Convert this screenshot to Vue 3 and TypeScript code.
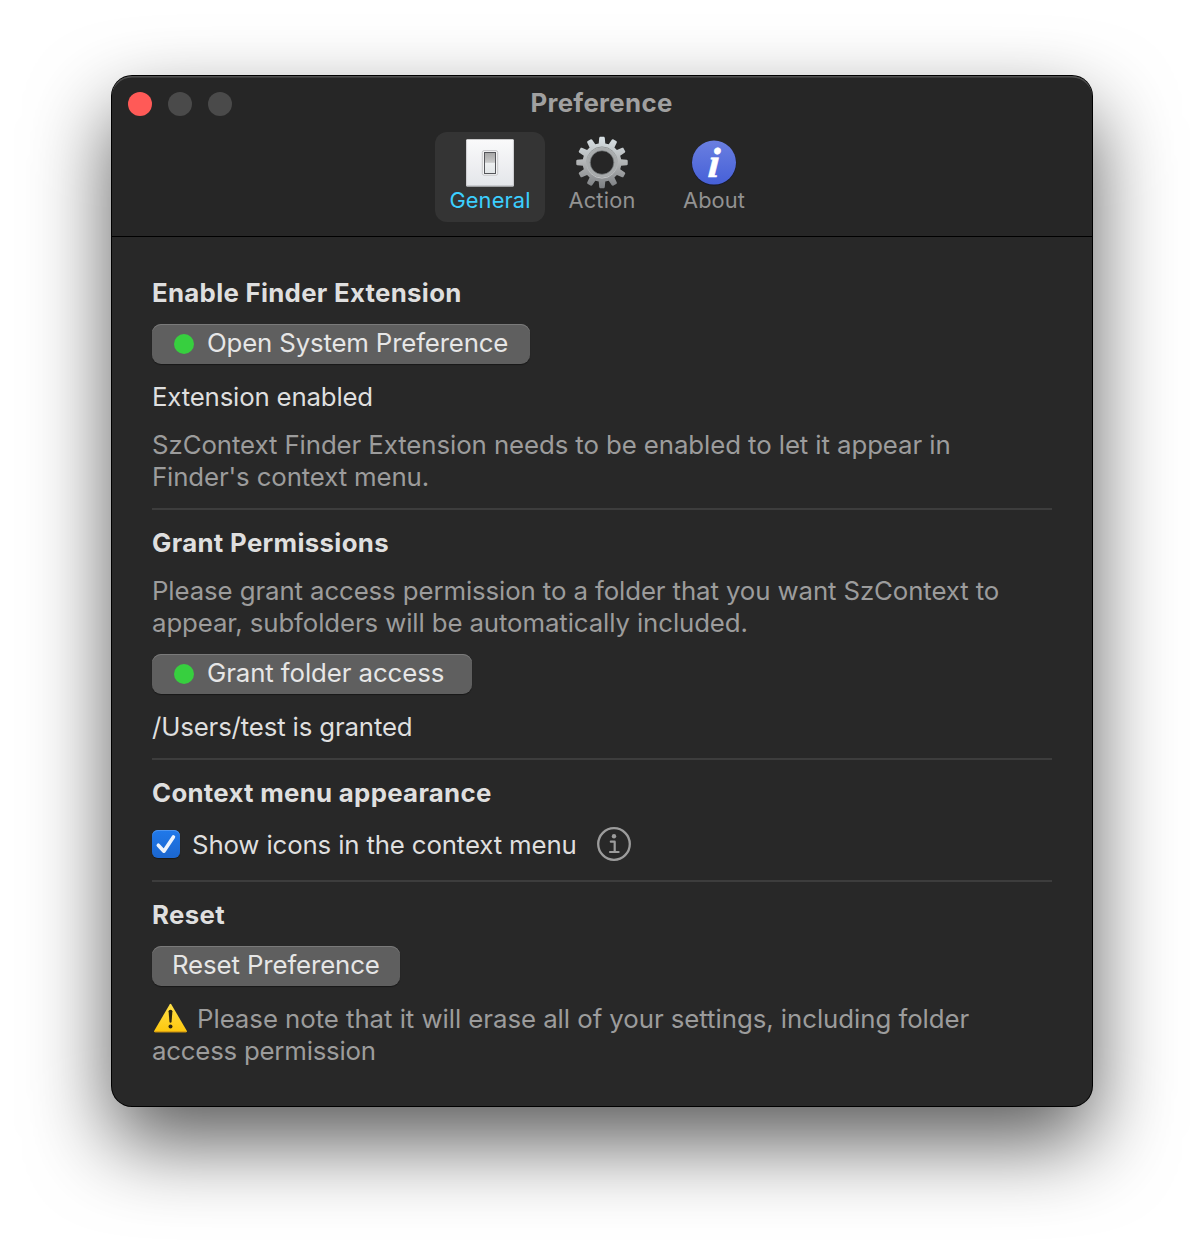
<script setup lang="ts">
import type { Directive } from 'vue'

// Tracks a single line of text so that its advance width equals the given value.
const vTrack: Directive<HTMLElement, number> = {
  mounted(el, { value }) {
    const count = (el.textContent ?? '').length
    const natural = el.getBoundingClientRect().width
    el.style.letterSpacing = `${(value - natural) / count}px`
  },
}

// Outline of a twelve-toothed gear centred on the origin.
function gearPath(): string {
  const teeth = 12
  const root = 19.4
  const tip = 25.8
  const points: string[] = []
  for (let i = 0; i < teeth; i++) {
    const mid = (i * 2 * Math.PI) / teeth
    const corners: [number, number][] = [
      [root, -0.17],
      [tip - 0.8, -0.112],
      [tip, -0.08],
      [tip, 0.08],
      [tip - 0.8, 0.112],
      [root, 0.17],
    ]
    for (const [r, a] of corners) {
      points.push(`${(r * Math.sin(mid + a)).toFixed(2)} ${(-r * Math.cos(mid + a)).toFixed(2)}`)
    }
  }
  return `M${points.join('L')}ZM11.8 0A11.8 11.8 0 1 0 -11.8 0A11.8 11.8 0 1 0 11.8 0Z`
}

const gear = gearPath()
</script>

<template>
  <main class="desktop">
    <section class="window">
      <header class="titlebar">
        <div class="lights">
          <i class="light close"></i>
          <i class="light"></i>
          <i class="light"></i>
        </div>
        <h1><span v-track="142.2" class="line">Preference</span></h1>
        <nav class="tabs">
          <button class="tab active">
            <svg width="56" height="56" viewBox="0 0 56 56">
              <defs>
                <linearGradient id="plate" x1="0" y1="0" x2="0" y2="1">
                  <stop offset="0" stop-color="#fafafb" />
                  <stop offset="1" stop-color="#e4e6ea" />
                </linearGradient>
                <linearGradient id="rocker" x1="0" y1="0" x2="0" y2="1">
                  <stop offset="0" stop-color="#a5a5a5" />
                  <stop offset=".47" stop-color="#c9c9c9" />
                  <stop offset=".5" stop-color="#eef0f1" />
                  <stop offset="1" stop-color="#e2e5e7" />
                </linearGradient>
              </defs>
              <rect x="4.2" y="5.2" width="47.6" height="47.2" rx="1" fill="url(#plate)" />
              <path d="M4.6 51.9H51.4" stroke="#babcc0" stroke-width="1" />
              <path d="M4.6 6V51.5M51.4 6V51.5" stroke="#d0d1d4" stroke-width=".8" />
              <rect x="20.3" y="16.6" width="15.4" height="24.6" rx="1.8" fill="#f4f4f5" stroke="#c2c2c4" stroke-width=".9" />
              <rect x="22.5" y="18.5" width="11" height="21" fill="url(#rocker)" stroke="#55565a" stroke-width="1" />
            </svg>
            <span v-track="81.2" class="line">General</span>
          </button>
          <button class="tab">
            <svg width="56" height="56" viewBox="0 0 56 56">
              <defs>
                <linearGradient id="steel" x1="0" y1="0" x2="0" y2="1">
                  <stop offset="0" stop-color="#d8e1e5" />
                  <stop offset=".5" stop-color="#b2b4b5" />
                  <stop offset="1" stop-color="#7c7f82" />
                </linearGradient>
                <linearGradient id="rim" x1="0" y1="0" x2="0" y2="1">
                  <stop offset="0" stop-color="#8f9495" />
                  <stop offset="1" stop-color="#c4c6c7" />
                </linearGradient>
              </defs>
              <g transform="translate(28 28.5)">
                <path :d="gear" fill="url(#steel)" fill-rule="evenodd" />
                <circle r="15.6" fill="none" stroke="url(#rim)" stroke-width="1" />
                <circle r="13.4" fill="none" stroke="#a8abac" stroke-width="3" />
                <circle r="11.8" fill="none" stroke="#707375" stroke-width=".8" />
              </g>
            </svg>
            <span v-track="67.2" class="line">Action</span>
          </button>
          <button class="tab">
            <svg width="56" height="56" viewBox="0 0 56 56">
              <defs>
                <linearGradient id="ball" x1="0" y1="0" x2="0" y2="1">
                  <stop offset="0" stop-color="#6a7fe0" />
                  <stop offset="1" stop-color="#4660d8" />
                </linearGradient>
              </defs>
              <circle cx="28" cy="29.3" r="22.4" fill="#191b2c" />
              <circle cx="28" cy="28.6" r="22" fill="url(#ball)" />
              <text x="-1" y="0" transform="translate(22.3 43) skewX(-4)" class="glyph">i</text>
            </svg>
            <span v-track="62" class="line">About</span>
          </button>
        </nav>
      </header>

      <div class="content">
        <section class="group">
          <h2><span v-track="309.6" class="line">Enable Finder Extension</span></h2>
          <button class="push push-open">
            <i class="dot"></i><span v-track="301.2" class="line">Open System Preference</span>
          </button>
          <p class="status"><span v-track="221" class="line">Extension enabled</span></p>
          <p class="note">
            <span v-track="798.6" class="line">SzContext Finder Extension needs to be enabled to let it appear in</span><br />
            <span v-track="277" class="line">Finder's context menu.</span>
          </p>
        </section>

        <section class="group">
          <h2><span v-track="237" class="line">Grant Permissions</span></h2>
          <p class="note">
            <span v-track="847.2" class="line">Please grant access permission to a folder that you want SzContext to</span><br />
            <span v-track="595.8" class="line">appear, subfolders will be automatically included.</span>
          </p>
          <button class="push push-grant">
            <i class="dot"></i><span v-track="237.3" class="line">Grant folder access</span>
          </button>
          <p class="status"><span v-track="260.5" class="line">/Users/test is granted</span></p>
        </section>

        <section class="group group-menu">
          <h2><span v-track="339.6" class="line">Context menu appearance</span></h2>
          <div class="option">
            <span class="checkbox">
              <svg width="28" height="28" viewBox="0 0 28 28">
                <path d="M6.3 15.2L11.9 21.2L21.4 6.9" fill="none" stroke="#fff" stroke-opacity=".92" stroke-width="3.6" stroke-linecap="round" stroke-linejoin="round" />
              </svg>
            </span>
            <span v-track="384.6" class="line">Show icons in the context menu</span>
            <svg class="info" width="34" height="34" viewBox="0 0 34 34">
              <g fill="none" stroke="#9c9c9c">
                <circle cx="17" cy="17" r="15.8" stroke-width="2.3" />
                <path d="M13.8 14.7H17.7V24.9M13 25H21.6" stroke-width="2.2" stroke-linecap="round" stroke-linejoin="round" />
              </g>
              <circle cx="17" cy="9.3" r="2.2" fill="#9c9c9c" />
            </svg>
          </div>
        </section>

        <section class="group">
          <h2><span v-track="73.2" class="line">Reset</span></h2>
          <button class="push push-reset"><span v-track="207.8" class="line">Reset Preference</span></button>
          <p class="note note-reset">
            <svg class="warning" width="34" height="30" viewBox="0 0 34 30">
              <defs>
                <linearGradient id="amber" x1="0" y1="0" x2="0" y2="1">
                  <stop offset="0" stop-color="#ffe04a" />
                  <stop offset="1" stop-color="#fdc70c" />
                </linearGradient>
              </defs>
              <path d="M15.6 1.4Q16.5 0 17.4 1.4L32.6 27.6Q33.4 29.2 32 29.2H1Q-.4 29.2 .4 27.6Z" fill="url(#amber)" />
              <path d="M1 28.7H32" stroke="#d99b12" stroke-width="1" />
              <path d="M14.6 8.2Q14.6 6.7 16.5 6.7T18.4 8.2L17.6 18.6Q17.4 19.8 16.5 19.8T15.4 18.6Z" fill="#2a2410" />
              <circle cx="16.5" cy="23.6" r="2" fill="#2a2410" />
            </svg><span v-track="772.2" class="line">Please note that it will erase all of your settings, including folder</span><br />
            <span v-track="223.8" class="line">access permission</span>
          </p>
        </section>
      </div>
    </section>
  </main>
</template>

<style>
body {
  margin: 0;
  background: #fff;
}
</style>

<style scoped>
.desktop {
  box-sizing: border-box;
  width: 1204px;
  height: 1254px;
  padding: 76px 112px 0;
  overflow: hidden;
  background: #fff;
  font-family: Inter, "Liberation Sans", sans-serif;
  font-size: 25.8px;
  font-weight: 430;
  line-height: 32px;
  color: #dfdfdf;
}
.window {
  width: 980px;
  height: 1030px;
  border-radius: 20px;
  background: #282828;
  box-shadow: 0 0 0 1px #000, 0 36px 82px rgba(0, 0, 0, 0.65);
}
.titlebar {
  position: relative;
  box-sizing: border-box;
  height: 161px;
  border-bottom: 1px solid #000;
  border-radius: 20px 20px 0 0;
  background: #262626;
  box-shadow: inset 0 2px 0 -0.5px #505050;
}
.lights {
  position: absolute;
  left: 16px;
  top: 16px;
  display: flex;
  gap: 16px;
}
.light {
  width: 24px;
  height: 24px;
  border-radius: 50%;
  background: #4a4a4a;
}
.light.close {
  background: #ff5a57;
}
h1,
h2,
p {
  margin: 0;
  font-size: inherit;
  font-weight: inherit;
}
h1 {
  padding: 11px 1px 0 0;
  text-align: center;
  font-weight: 660;
  color: #a0a0a0;
}
.line {
  display: inline-block;
  white-space: nowrap;
}
.tabs {
  display: flex;
  justify-content: center;
  gap: 2px;
  margin-top: 13px;
}
button {
  padding: 0;
  border: 0;
  font: inherit;
  color: inherit;
}
.tab {
  display: flex;
  flex-direction: column;
  align-items: center;
  width: 110px;
  height: 90px;
  padding-top: 2px;
  border-radius: 12px;
  background: none;
  font-size: 21.8px;
  line-height: 26px;
  color: #929292;
}
.tab svg {
  margin-bottom: -3px;
}
.tab.active {
  background: #343434;
  color: #3ccfff;
}
.glyph {
  font: italic 700 42px "Liberation Serif", serif;
  fill: #fff;
  stroke: #fff;
  stroke-width: 0.5px;
}
.content {
  padding: 0 40px;
}
.group {
  padding: 17px 0 15px;
  border-bottom: 2px solid #3d3d3d;
}
.group:first-child {
  padding-top: 40px;
}
.group:last-child {
  border-bottom: 0;
}
.group-menu {
  padding-bottom: 19px;
}
h2 {
  font-weight: 720;
}
.push {
  display: flex;
  align-items: flex-start;
  box-sizing: border-box;
  height: 40px;
  margin: 15px 0 17px;
  padding: 3px 0 0 20px;
  border-radius: 9px;
  background: #5f5f5f;
  box-shadow: inset 0 1px 0 #7a7a7a, 0 1px 1px rgba(0, 0, 0, 0.4);
  color: #e6e6e6;
}
.push-open {
  width: 378px;
}
.push-grant {
  width: 320px;
}
.push-reset {
  width: 248px;
}
.dot {
  flex: none;
  width: 20px;
  height: 20px;
  margin: 7px 13px 0 2px;
  border-radius: 50%;
  background: #37cf3f;
}
.note {
  margin-top: 16px;
  color: #9c9c9c;
}
.option {
  display: flex;
  align-items: center;
  height: 32px;
  margin-top: 20px;
}
.checkbox {
  width: 28px;
  height: 28px;
  margin: -2px 12px 0 0;
  border-radius: 6px;
  background: linear-gradient(#2079ea, #1b66cf);
  box-shadow: inset 0 1px 0 #4c94ef, 0 1px 1px rgba(0, 0, 0, 0.4);
}
.checkbox svg {
  display: block;
}
.info {
  margin: -2px 0 0 20.4px;
}
.warning {
  height: 30px;
  margin: -4px 9px 0 2px;
  vertical-align: -5px;
}
.note-reset {
  margin-top: 15px;
}
</style>
